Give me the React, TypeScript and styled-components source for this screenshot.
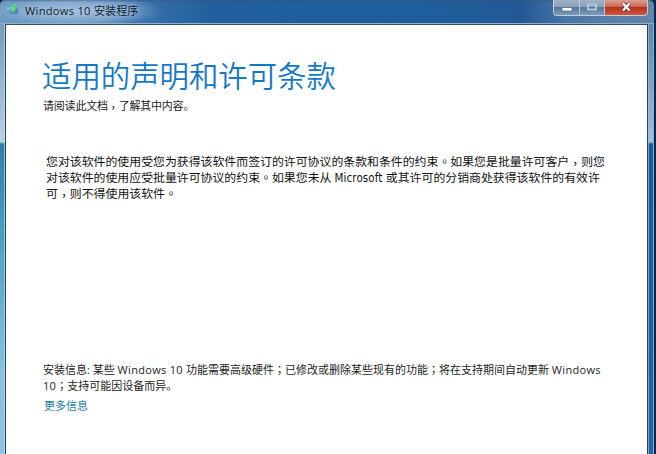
import styled, { createGlobalStyle, css } from "styled-components";

const licenseLines = [
  "您对该软件的使用受您为获得该软件而签订的许可协议的条款和条件的约束。如果您是批量许可客户，则您",
  "对该软件的使用应受批量许可协议的约束。如果您未从 Microsoft 或其许可的分销商处获得该软件的有效许",
  "可，则不得使用该软件。",
];

const noticeLines = [
  "安装信息: 某些 Windows 10 功能需要高级硬件；已修改或删除某些现有的功能；将在支持期间自动更新 Windows",
  "10；支持可能因设备而异。",
];

// wraps latin words and full-width marks so each gets its own font and spacing
function MixedText({ text }: { text: string }) {
  return text.split(/([A-Za-z0-9][A-Za-z0-9 ]*|[。，；])/).map((part, i) => {
    if (i % 2 === 0) return part;
    if (part === "。") return <Stop key={i}>{part}</Stop>;
    if (part === "，") return <Comma key={i}>{part}</Comma>;
    if (part === "；") return <Mark key={i}>{part}</Mark>;
    return <Latin key={i}>{part}</Latin>;
  });
}

export default function App() {
  return (
    <Desktop>
      <GlobalStyle />
      <Window>
        <TitleBar>
          <SetupIcon />
          <Caption>
            <MixedText text="Windows 10 安装程序" />
          </Caption>
          <Controls>
            <ControlButton $width={25} aria-label="Minimize">
              <svg width="25" height="15">
                <rect x="8" y="7.5" width="10" height="3.5" rx="0.5" fill="#fff" stroke="#52647f" strokeWidth="0.7" />
              </svg>
            </ControlButton>
            <ControlButton $width={25} aria-label="Maximize">
              <svg width="24" height="15">
                <rect x="8" y="4.5" width="8" height="5" fill="none" stroke="#b4c9d8" strokeWidth="1.8" />
              </svg>
            </ControlButton>
            <ControlButton $width={43} $close aria-label="Close">
              <svg width="42" height="15">
                <path d="M18 3.5l6.5 7M24.5 3.5l-6.5 7" stroke="#5d3035" strokeWidth="4" />
                <path d="M18 3.5l6.5 7M24.5 3.5l-6.5 7" stroke="#fff" strokeWidth="2.5" />
              </svg>
            </ControlButton>
          </Controls>
        </TitleBar>
        <Body>
          <LeftEdge />
          <Page>
            <Title>适用的声明和许可条款</Title>
            <Subtitle>
              <MixedText text="请阅读此文档，了解其中内容。" />
            </Subtitle>
            <License>
              {licenseLines.map((text) => (
                <Line key={text}>
                  <MixedText text={text} />
                </Line>
              ))}
            </License>
            <Notice>
              {noticeLines.map((text) => (
                <Line key={text}>
                  <MixedText text={text} />
                </Line>
              ))}
            </Notice>
            <MoreLink>更多信息</MoreLink>
          </Page>
          <RightEdge />
        </Body>
      </Window>
    </Desktop>
  );
}

function SetupIcon() {
  return (
    <IconBox width="14" height="14" viewBox="0 0 14 14">
      <path d="M1 5l5-1v7l-5-1z" fill="#659fca" />
      <path d="M5 5h7v6H5z" fill="#4687b5" />
      <path d="M1 5l5-1v2l-5 1z" fill="#9ac5df" />
      <path
        d="M10.5 1C7 1 6 2.5 6 5H3.5l3.5 4.5L10.5 5h-2C8.5 3.5 9 2 10.5 1z"
        fill="#54df83"
        stroke="#4cc987"
        strokeWidth="0.5"
      />
    </IconBox>
  );
}

const GlobalStyle = createGlobalStyle`
  body {
    margin: 0;
    overflow: hidden;
  }
`;

const Desktop = styled.div`
  width: 656px;
  height: 454px;
  box-sizing: border-box;
  padding-right: 2px;
  background: #062750;
  overflow: hidden;
  font-family: "Open Sans", "Noto Sans CJK SC", sans-serif;
`;

const Window = styled.div`
  display: flex;
  flex-direction: column;
  height: 100%;
  border-radius: 5px 5px 0 0;
  overflow: hidden;
`;

const TitleBar = styled.header`
  display: flex;
  align-items: flex-start;
  flex: none;
  height: 24px;
  box-sizing: border-box;
  border-bottom: 1px solid #91b0ce;
  background:
    linear-gradient(rgba(60, 70, 100, 0.45), transparent 2px),
    radial-gradient(ellipse 84px 17px at 78px 11px, rgba(190, 210, 232, 0.75), rgba(165, 193, 222, 0.55) 60%, transparent),
    linear-gradient(90deg, #6f9bc3 0, #3d75ae 130px, #215f9e 210px, #1e5e9d 420px, #235896 520px, #4d77a6 570px, #6585aa);
`;

const IconBox = styled.svg`
  flex: none;
  margin: 3px 0 0 6px;
`;

const Latin = styled.span`
  letter-spacing: 0.3px;
`;

/* centred in its cell */
const Mark = styled.span`
  font-family: "Noto Sans CJK TC", sans-serif;
  line-height: 1;
`;

const Comma = styled(Mark)`
  vertical-align: -2px;
`;

const Stop = styled.span``;

const Caption = styled.span`
  margin: 3px auto 0 5px;
  font-size: 11.1px;
  line-height: 16px;
  color: #0b1a2e;
  white-space: nowrap;
  text-shadow: 0 0 4px rgba(220, 235, 250, 0.7);
`;

const Controls = styled.div`
  display: flex;
  margin-right: 6px;
  border: 1px solid #c0d0df;
  border-top: 0;
  border-radius: 0 0 4px 4px;
  overflow: hidden;
`;

const glass = css`
  background: linear-gradient(#a0b2c7, #8aa2bc 45%, #56779c 50%, #7c9cb9);
`;

const closeGlass = css`
  background: linear-gradient(#dca094, #cb6552 45%, #b5301c 50%, #d0573c);
`;

const ControlButton = styled.button<{ $width: number; $close?: boolean }>`
  display: block;
  box-sizing: border-box;
  width: ${(p) => p.$width}px;
  height: 15px;
  padding: 0;
  border: 0;
  ${(p) => (p.$close ? closeGlass : glass)}

  & + & {
    border-left: 1px solid #b5c7d8;
  }

  svg {
    display: block;
  }
`;

const Body = styled.div`
  display: flex;
  flex: 1;
`;

/* light glass on top, tinted glass below */
const LeftEdge = styled.div`
  width: 6px;
  box-sizing: border-box;
  border-right: 1px solid #204568;
  background:
    linear-gradient(90deg, transparent 4px, rgba(200, 230, 245, 0.6) 4px),
    linear-gradient(#7799bb 0, #b9d2e2 118px, #347da9 120px, #459bbd 200px, #88c2e0 350px, #8dc6e4);
`;

const RightEdge = styled.div`
  width: 7px;
  box-sizing: border-box;
  border-left: 1px solid #244568;
  border-right: 1px solid #7fb0d6;
  background:
    linear-gradient(90deg, rgba(150, 195, 225, 0.7) 1px, transparent 1px),
    linear-gradient(#6283aa 0, #a9bdd5 118px, #23588f 120px, #2a629c);
`;

const Page = styled.main`
  flex: 1;
  box-sizing: border-box;
  padding: 31px 0 0 37px;
  border-top: 1px solid #35506f;
  background: #fff;
  color: #1c1c1c;
`;

const Title = styled.h1`
  margin: 0 0 0 -1px;
  font-size: 29.4px;
  font-weight: 350;
  line-height: 40px;
  color: #1478c8;
`;

const Subtitle = styled.p`
  height: 16px;
  margin: 2px 0 0;
  font-size: 11px;
  line-height: 16px;
  letter-spacing: -0.2px;
`;

const License = styled.section`
  margin: 39px 0 0 3px;
  font-size: 11.9px;
  color: #111;

  ${Latin} {
    font-family: "DejaVu Sans Condensed", "DejaVu Sans", sans-serif;
    font-stretch: condensed;
    font-size: 11.5px;
    line-height: 1;
    letter-spacing: 0.1px;
  }

  ${Stop} {
    font-family: "Noto Sans CJK TC", sans-serif;
    line-height: 1;
  }
`;

const Line = styled.p`
  height: 16px;
  margin: 0;
  line-height: 16px;
  white-space: nowrap;
`;

const Notice = styled.section`
  margin-top: 161px;
  font-size: 11px;
`;

const MoreLink = styled.a`
  display: block;
  margin: 4px 0 0 1px;
  font-size: 11px;
  line-height: 16px;
  color: #2482a5;
`;
